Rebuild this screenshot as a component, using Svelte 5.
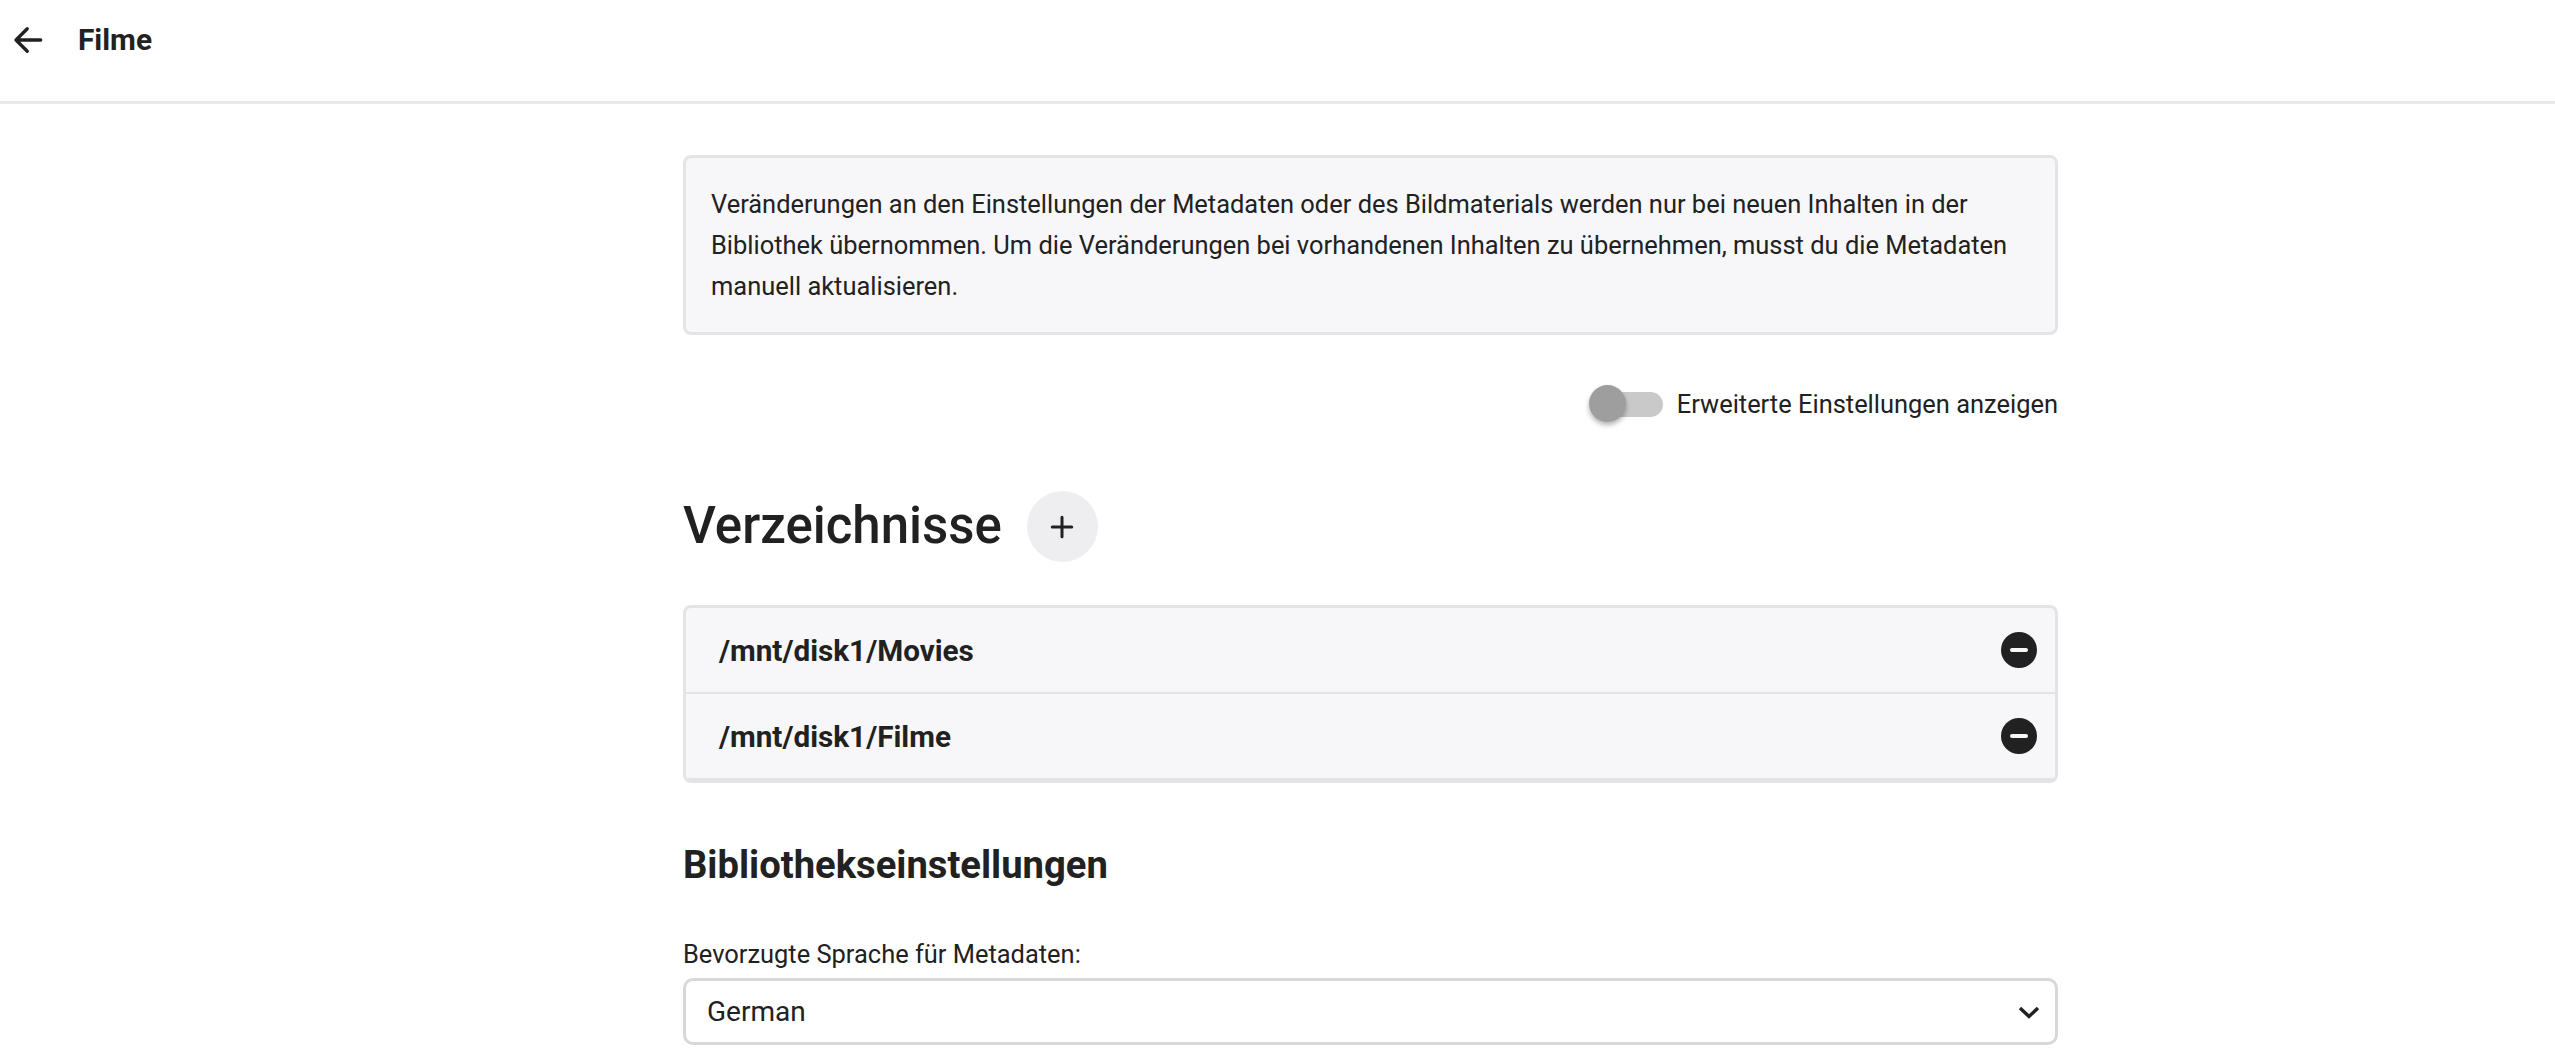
<script>
	let dirs = ['/mnt/disk1/Movies', '/mnt/disk1/Filme'];
</script>

<div class="page">
	<header class="top">
		<button class="back" aria-label="Zurück">
			<svg viewBox="0 0 24 24" width="36" height="36"><path d="M20.500 12H4.500M11.500 4.500 4 12l7.500 7.500" fill="none" stroke="#212121" stroke-width="2.200" stroke-linecap="round" stroke-linejoin="round"/></svg>
		</button>
		<h3>Filme</h3>
	</header>

	<main class="content">
		<div class="notice">
			Veränderungen an den Einstellungen der Metadaten oder des Bildmaterials werden nur bei neuen Inhalten in der Bibliothek übernommen. Um die Veränderungen bei vorhandenen Inhalten zu übernehmen, musst du die Metadaten manuell aktualisieren.
		</div>

		<div class="toggle-row">
			<span class="toggle"><span class="knob"></span></span>
			<span>Erweiterte Einstellungen anzeigen</span>
		</div>

		<div class="section-head">
			<h1>Verzeichnisse</h1>
			<button class="add" aria-label="Hinzufügen">
				<svg viewBox="0 0 24 24" width="36" height="36"><path d="M12 5.500v13M5.500 12h13" fill="none" stroke="#212121" stroke-width="2" stroke-linecap="round"/></svg>
			</button>
		</div>

		<ul class="dirs">
			{#each dirs as dir}
				<li>
					<span>{dir}</span>
					<span class="remove"></span>
				</li>
			{/each}
		</ul>

		<h2>Bibliothekseinstellungen</h2>

		<label class="field" for="lang">Bevorzugte Sprache für Metadaten:</label>
		<div class="select" id="lang">
			<span>German</span>
			<svg viewBox="0 0 24 24" width="24" height="24"><path d="M3 8l9 8.500L21 8" fill="none" stroke="#212121" stroke-width="3.400"/></svg>
		</div>
	</main>
</div>

<style>
	:global(body) {
		margin: 0;
		background: #fff;
		overflow: hidden;
	}
	.page {
		font-family: Roboto, sans-serif;
		font-size: 25.45px;
		color: #212121;
		height: 1063px;
		overflow: hidden;
	}
	.top {
		display: flex;
		align-items: center;
		height: 79px;
		border-bottom: 3px solid #e8e8e8;
		padding-left: 10px;
		padding-bottom: 22px;
	}
	.back {
		background: none;
		border: 0;
		padding: 0;
		width: 36px;
		height: 36px;
		margin-right: 32px;
	}
	.top h3 {
		margin: 0;
		font-size: 29.800px;
		font-weight: 700;
	}
	.content {
		width: 1375px;
		margin-left: 683px;
		padding-top: 51px;
	}
	.notice {
		box-sizing: border-box;
		background: #f7f7f9;
		border: 3px solid #e4e4e6;
		border-radius: 8px;
		padding: 26px 25px;
		line-height: 41px;
		height: 180px;
	}
	.toggle-row {
		display: flex;
		justify-content: flex-end;
		align-items: center;
		gap: 14px;
		margin-top: 53px;
		line-height: 32px;
	}
	.toggle {
		position: relative;
		display: block;
		width: 72px;
		height: 25px;
		border-radius: 13px;
		background: #c9c9c9;
	}
	.knob {
		position: absolute;
		left: -2px;
		top: -7px;
		width: 37px;
		height: 37px;
		border-radius: 50%;
		background: #9e9e9e;
		box-shadow: 0 3px 5px rgba(0, 0, 0, 0.3);
	}
	.section-head {
		display: flex;
		align-items: center;
		gap: 25px;
		margin-top: 71px;
	}
	h1 {
		margin: 0 0 2px;
		font-size: 51px;
		font-weight: 500;
		line-height: 69px;
	}
	.add {
		width: 71px;
		height: 71px;
		border: 0;
		border-radius: 50%;
		background: #eeeef0;
		padding: 0;
		display: flex;
		align-items: center;
		justify-content: center;
	}
	.dirs {
		list-style: none;
		margin: 43px 0 0;
		padding: 0;
		background: #f7f7f9;
		border: 3px solid #e4e4e6;
		border-radius: 8px;
	}
	.dirs li {
		display: flex;
		justify-content: space-between;
		align-items: center;
		height: 84px;
		padding: 0 18px 0 33px;
		font-size: 29.700px;
		font-weight: 700;
		border-bottom: 2px solid #e4e4e6;
	}
	.remove {
		position: relative;
		width: 36px;
		height: 36px;
		border-radius: 50%;
		background: #212121;
	}
	.remove::after {
		content: '';
		position: absolute;
		left: 9px;
		top: 15.500px;
		width: 18px;
		height: 4px;
		border-radius: 2px;
		background: #f7f7f9;
	}
	h2 {
		margin: 60px 0 0;
		font-size: 38.200px;
		font-weight: 700;
		line-height: 44px;
	}
	.field {
		display: block;
		margin-top: 51px;
		line-height: 32px;
	}
	.select {
		box-sizing: border-box;
		display: flex;
		justify-content: space-between;
		align-items: center;
		height: 67px;
		margin-top: 8px;
		padding: 0 14px 0 21px;
		border: 3px solid #d8d8d8;
		border-radius: 10px;
		font-size: 28px;
	}
</style>
